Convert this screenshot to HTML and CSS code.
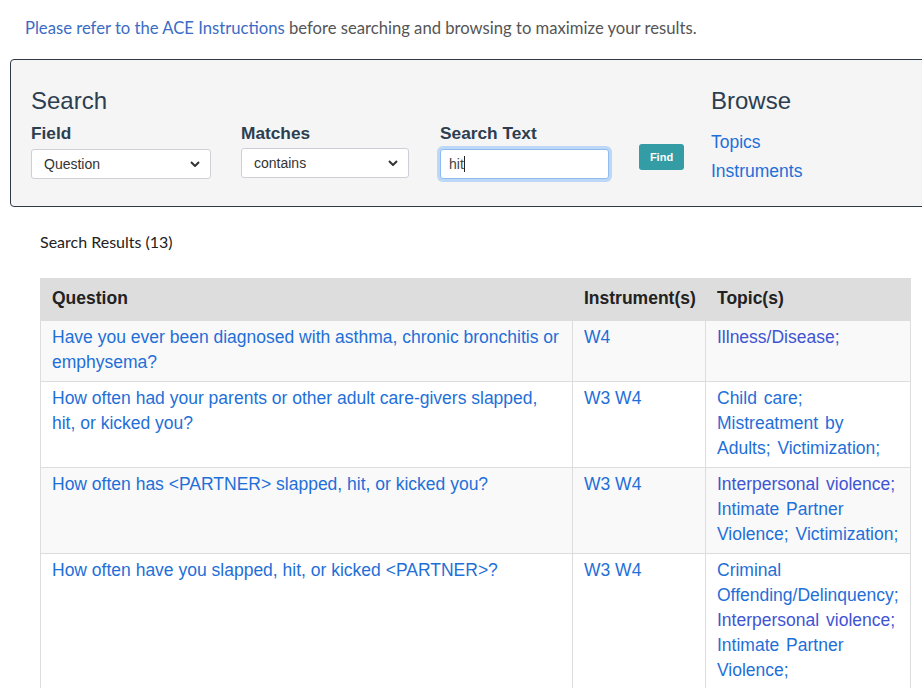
FILE: index.html
```html
<!DOCTYPE html>
<html lang="en">
<head>
<meta charset="utf-8">
<title>ACE Search</title>
<link rel="stylesheet" href="styles.css">
</head>
<body>
<p class="intro"><a href="#" class="intro-link">Please refer to the ACE Instructions</a> before searching and browsing to maximize your results.</p>

<div class="panel">
  <div class="search-col">
    <h2 class="panel-title">Search</h2>
    <div class="fields">
      <div class="field field-1">
        <label class="lbl">Field</label>
        <div class="select"><span>Question</span><svg class="chev" viewBox="0 0 10 6" width="10" height="6"><path d="M1 1 L5 5 L9 1" fill="none" stroke="#333" stroke-width="2"/></svg></div>
      </div>
      <div class="field field-2">
        <label class="lbl">Matches</label>
        <div class="select select-2"><span>contains</span><svg class="chev" viewBox="0 0 10 6" width="10" height="6"><path d="M1 1 L5 5 L9 1" fill="none" stroke="#333" stroke-width="2"/></svg></div>
      </div>
      <div class="field field-3">
        <label class="lbl">Search Text</label>
        <div class="input"><span>hit</span><span class="caret"></span></div>
      </div>
      <button class="find">Find</button>
    </div>
  </div>
  <div class="browse-col">
    <h2 class="panel-title browse-title">Browse</h2>
    <a href="#" class="browse-link">Topics</a>
    <a href="#" class="browse-link">Instruments</a>
  </div>
</div>

<div class="results">
  <div class="results-title">Search Results (13)</div>
  <table class="tbl">
    <colgroup><col class="c1"><col class="c2"><col class="c3"></colgroup>
    <thead>
      <tr><th>Question</th><th>Instrument(s)</th><th>Topic(s)</th></tr>
    </thead>
    <tbody>
      <tr class="odd">
        <td><a href="#">Have you ever been diagnosed with asthma, chronic bronchitis or emphysema?</a></td>
        <td><a href="#">W4</a></td>
        <td class="topics"><a href="#" class="visited">Illness/Disease;</a></td>
      </tr>
      <tr>
        <td><a href="#">How often had your parents or other adult care-givers slapped, hit, or kicked you?</a></td>
        <td><a href="#">W3 W4</a></td>
        <td class="topics"><a href="#">Child care;</a> <a href="#">Mistreatment by Adults;</a> <a href="#">Victimization;</a></td>
      </tr>
      <tr class="odd">
        <td><a href="#">How often has &lt;PARTNER&gt; slapped, hit, or kicked you?</a></td>
        <td><a href="#">W3 W4</a></td>
        <td class="topics"><a href="#" class="visited">Interpersonal violence;</a> <a href="#">Intimate Partner Violence;</a> <a href="#">Victimization;</a></td>
      </tr>
      <tr>
        <td><a href="#">How often have you slapped, hit, or kicked &lt;PARTNER&gt;?</a></td>
        <td><a href="#">W3 W4</a></td>
        <td class="topics"><a href="#">Criminal Offending/Delinquency;</a> <a href="#" class="visited">Interpersonal violence;</a> <a href="#">Intimate Partner Violence;</a></td>
      </tr>
    </tbody>
  </table>
</div>
</body>
</html>
```

FILE: styles.css
```css
html { overflow-x: hidden; }
body {
  margin: 0;
  font-family: "Liberation Sans", Arial, sans-serif;
  color: #333;
  background: #fff;
  width: 960px;
}
a { text-decoration: none; }

.intro {
  margin: 16px 0 0 25px;
  font-family: Lato, "Open Sans", sans-serif;
  font-size: 16.65px;
  line-height: 24px;
  color: #555;
}
.intro-link { color: #3b6cc4; }

.panel {
  margin: 19px 0 0 10px;
  width: 940px;
  height: 146px;
  box-sizing: content-box;
  border: 1px solid #2e3a48;
  border-radius: 4px;
  background: #f5f5f5;
  display: flex;
  padding: 0 0 0 20px;
}
.panel-title {
  margin: 27px 0 0 0;
  font-size: 24px;
  line-height: 28px;
  font-weight: normal;
  color: #2c3e50;
}
.fields {
  display: flex;
  align-items: flex-start;
  margin-top: 8px;
}
.field { display: flex; flex-direction: column; }
.field-1 { width: 180px; margin-right: 30px; }
.field-2 { width: 168px; margin-right: 30px; }
.field-3 { width: 170px; margin-right: 30px; }
.lbl {
  font-weight: bold;
  font-size: 17.3px;
  line-height: 20px;
  color: #2c3e50;
  margin-bottom: 6px;
}
.field-3 .lbl { margin-left: 1px; }
.select {
  height: 28px;
  border: 1px solid #ccd0d6;
  border-radius: 3px;
  background: #fff;
  display: flex;
  align-items: center;
  justify-content: space-between;
  padding: 0 10px 0 12px;
  font-size: 14px;
  color: #333;
}
.select-2 { margin-top: -1px; }
.chev { display: block; }
.input {
  height: 28px;
  border: 1px solid #8fbdf0;
  border-radius: 3px;
  background: #fff;
  box-shadow: 0 0 0 3px #bcd8f6;
  display: flex;
  align-items: center;
  padding: 0 8px;
  font-size: 14px;
  color: #444;
  margin: 0 0 0 1px;
}
.caret {
  display: inline-block;
  width: 1px;
  height: 16px;
  background: #222;
}
.find {
  width: 45px;
  height: 26px;
  border: none;
  border-radius: 3px;
  background: #349ca5;
  color: #fff;
  font-family: "Liberation Sans", Arial, sans-serif;
  font-weight: bold;
  font-size: 11px;
  padding: 0;
  margin-top: 21px;
}
.browse-col {
  display: flex;
  flex-direction: column;
  margin-left: 27px;
}
.browse-title { margin-bottom: 13px; }
.browse-link {
  font-size: 17.5px;
  line-height: 29px;
  color: #1f6fd8;
}

.results {
  margin-left: 40px;
  width: 870px;
}
.results-title {
  font-family: Lato, "Open Sans", sans-serif;
  font-size: 16px;
  line-height: 20px;
  color: #222;
  margin: 25px 0 26px 0;
}
.tbl {
  width: 870px;
  table-layout: fixed;
  border-collapse: collapse;
  font-size: 17.5px;
  line-height: 25px;
}
.c1 { width: 532px; }
.c2 { width: 133px; }
.c3 { width: 205px; }
.tbl th {
  background: #dddddd;
  text-align: left;
  font-weight: bold;
  color: #222;
  padding: 7px 11px 9px 11px;
  border: 1px solid #dddddd;
}
.tbl td {
  vertical-align: top;
  padding: 4px 11px 6px 11px;
  border: 1px solid #dddddd;
}
.tbl td.topics { word-spacing: 2px; }
.tbl tr.odd td { background: #f9f9f9; }
.tbl td a { color: #1f6fd8; }
.tbl td a.visited { color: #3f54d4; }
```
